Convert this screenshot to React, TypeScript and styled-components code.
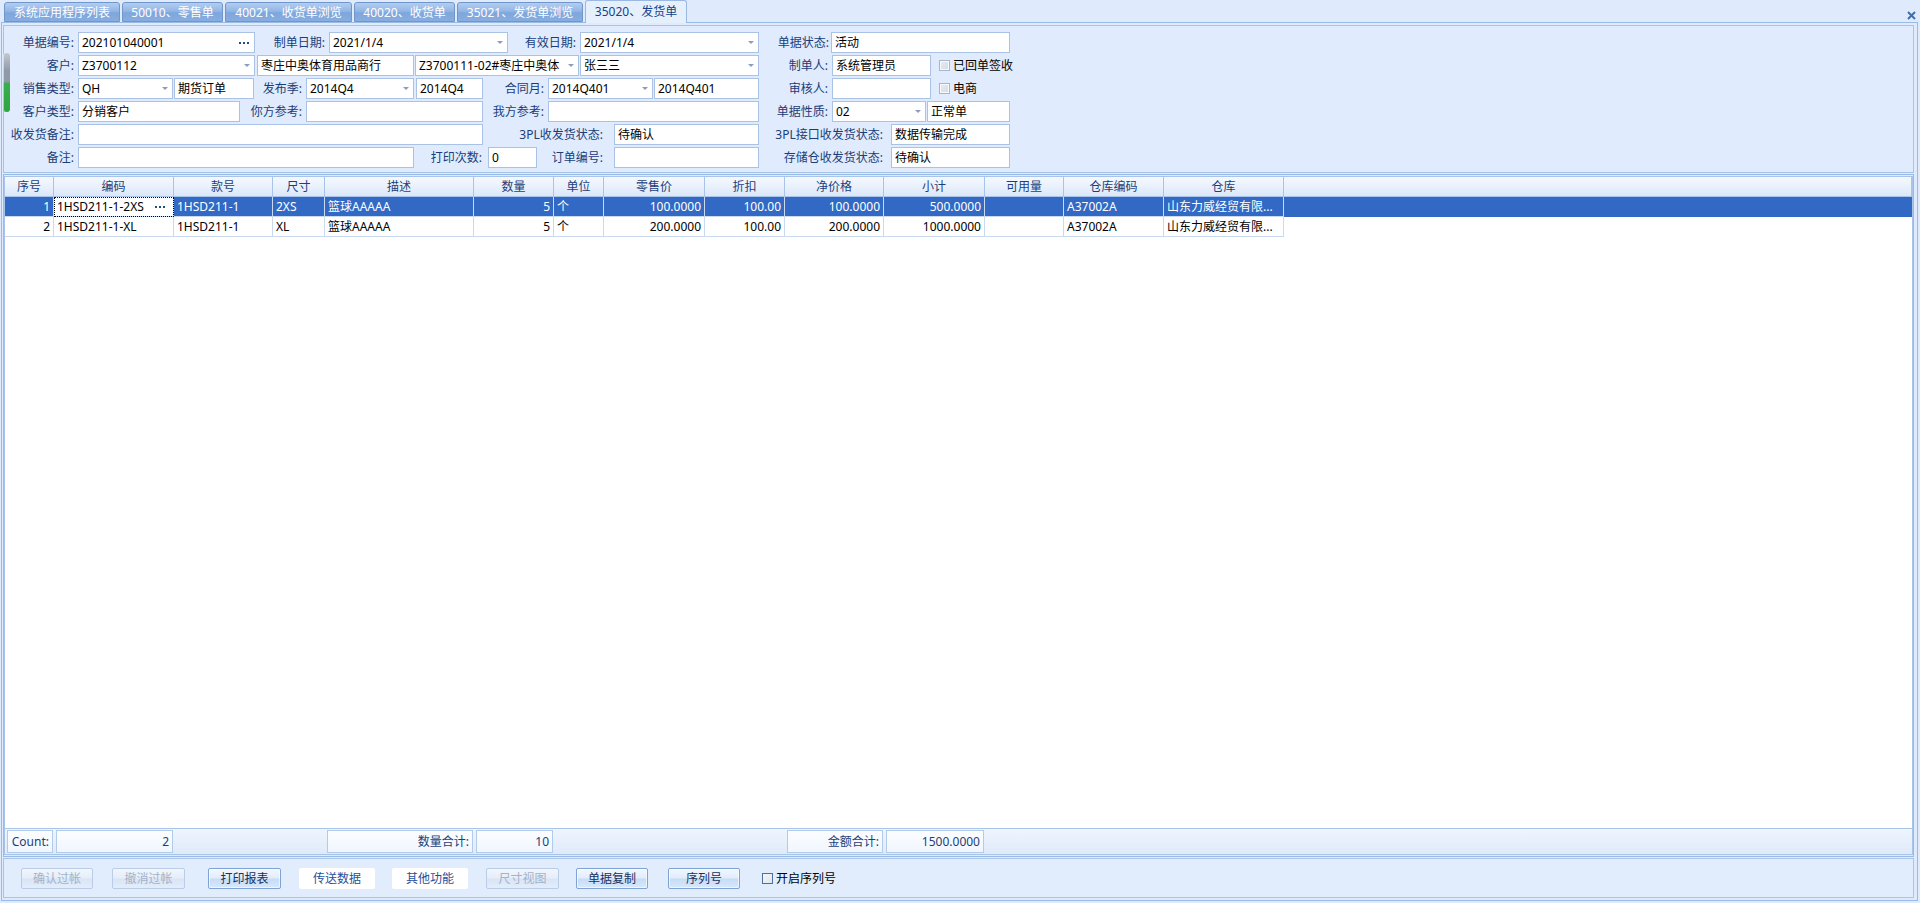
import React from "react";
import styled, { createGlobalStyle } from "styled-components";

const GlobalStyle = createGlobalStyle`
  html, body {
    margin: 0;
    padding: 0;
  }
  body {
    width: 1920px;
    height: 903px;
    overflow: hidden;
    background: #dfebfc;
    font-family: "Noto Sans", "Noto Sans CJK SC", sans-serif;
    font-size: 12px;
    line-height: 19px;
    color: #000;
  }
  * {
    box-sizing: border-box;
  }
`;

const Page = styled.div`
  width: 1920px;
  height: 903px;
  background: #dfebfc;
  display: flex;
  flex-direction: column;
`;

const TabBar = styled.div`
  height: 22px;
  display: flex;
  align-items: flex-end;
  padding-left: 4px;
  position: relative;
  flex-shrink: 0;
`;

const Tab = styled.div<{ $active?: boolean; $w: number }>`
  width: ${(p) => p.$w}px;
  height: ${(p) => (p.$active ? 23 : 20)}px;
  margin-right: 2px;
  margin-bottom: ${(p) => (p.$active ? -1 : 0)}px;
  position: relative;
  z-index: ${(p) => (p.$active ? 2 : 1)};
  display: flex;
  align-items: center;
  justify-content: center;
  white-space: nowrap;
  border: 1px solid ${(p) => (p.$active ? "#99b9e4" : "#6f97cc")};
  border-bottom: ${(p) => (p.$active ? "none" : "1px solid #6f97cc")};
  border-radius: 3px 3px 0 0;
  color: ${(p) => (p.$active ? "#15428b" : "#ffffff")};
  background: ${(p) =>
    p.$active
      ? "#e6f0fd"
      : "linear-gradient(to bottom, #b3cdf0 0%, #93b6e6 45%, #7ea6dc 55%, #88aee0 100%)"};
  padding-bottom: ${(p) => (p.$active ? 2 : 0)}px;
`;

const CloseBox = styled.div`
  position: absolute;
  right: 4px;
  top: 6px;
  width: 9px;
  height: 9px;
`;

const Frame = styled.div`
  margin-left: 1px;
  width: 1917px;
  height: 879px;
  border: 1px solid #99bbe8;
  padding: 2px 3px 2px 1px;
  display: flex;
  flex-direction: column;
  gap: 1px;
`;

const FormPanel = styled.div`
  height: 148px;
  flex-shrink: 0;
  border: 1px solid #a6c3ea;
  background: #e0ecfd;
  padding: 6px 0 0 0;
  position: relative;
`;

const SideThumb = styled.div`
  position: absolute;
  left: -1px;
  top: 27px;
  width: 7px;
  height: 59px;
  border-radius: 3px;
  background: linear-gradient(
    to bottom,
    #c3c9d0 0%,
    #8f9aa6 30%,
    #8f9aa6 48%,
    #38b04a 52%,
    #2fa443 100%
  );
  box-shadow: inset 1px 0 0 rgba(255, 255, 255, 0.5);
`;

const FormRow = styled.div`
  display: flex;
  align-items: center;
  height: 21px;
  & + & {
    margin-top: 2px;
  }
`;

const Label = styled.div<{ $w: number; $pr?: number }>`
  width: ${(p) => p.$w}px;
  flex-shrink: 0;
  text-align: right;
  padding-right: ${(p) => p.$pr ?? 4}px;
  color: #1a3c78;
  white-space: nowrap;
`;

const InputBox = styled.div<{ $w: number; $ml?: number }>`
  width: ${(p) => p.$w}px;
  height: 21px;
  flex-shrink: 0;
  margin-left: ${(p) => p.$ml ?? 0}px;
  border: 1px solid #a9c2e6;
  background: #ffffff;
  display: flex;
  align-items: center;
  padding-left: 3px;
  overflow: hidden;
`;

const InputText = styled.span`
  flex: 1;
  overflow: hidden;
  white-space: nowrap;
`;

const DropArrow = styled.span`
  width: 0;
  height: 0;
  flex-shrink: 0;
  border-left: 3px solid transparent;
  border-right: 3px solid transparent;
  border-top: 3px solid #8a9dbb;
  margin: 0 4px 0 3px;
`;

const Dots = styled.span`
  flex-shrink: 0;
  display: flex;
  gap: 2px;
  margin-right: 5px;
`;

const Dot = styled.span`
  width: 2px;
  height: 2px;
  background: #274b85;
`;

const CheckBox = styled.span<{ $ml?: number }>`
  width: 11px;
  height: 11px;
  flex-shrink: 0;
  margin-left: ${(p) => p.$ml ?? 0}px;
  border: 1px solid #a7b5c8;
  background: linear-gradient(to bottom right, #e9edf2, #d3dae3);
  box-shadow: inset 0 0 0 1px #f7f9fb;
`;

const CheckText = styled.span`
  margin-left: 3px;
  white-space: nowrap;
`;

const Grid = styled.div`
  height: 683px;
  flex-shrink: 0;
  border: 1px solid #99bbe8;
  padding: 1px 0 1px 0;
  background: #e0ecfd;
`;

const Table = styled.div`
  height: 100%;
  border: 1px solid #a9c4ea;
  display: flex;
  flex-direction: column;
  background: #ffffff;
`;

const HeaderRow = styled.div`
  height: 20px;
  display: flex;
  flex-shrink: 0;
  background: linear-gradient(to bottom, #f5f9fe 0%, #e9f1fc 50%, #dbe7f8 100%);
  border-bottom: 1px solid #a9c4ea;
`;

const HeadCell = styled.div<{ $w?: number }>`
  width: ${(p) => (p.$w ? `${p.$w}px` : "auto")};
  flex: ${(p) => (p.$w ? "0 0 auto" : "1")};
  border-right: 1px solid #a9c4ea;
  text-align: center;
  color: #1b3f7a;
  line-height: 19px;
  white-space: nowrap;
`;

const Body = styled.div`
  flex: 1;
  background: #ffffff;
`;

const DataRow = styled.div<{ $selected?: boolean }>`
  height: 20px;
  display: flex;
  background: ${(p) => (p.$selected ? "#3169c4" : "#ffffff")};
  color: ${(p) => (p.$selected ? "#ffffff" : "#000000")};
`;

const Cell = styled.div<{ $w: number; $right?: boolean; $editing?: boolean }>`
  width: ${(p) => p.$w}px;
  flex-shrink: 0;
  height: 20px;
  line-height: 19px;
  border-right: 1px solid #c9d9ef;
  border-bottom: 1px solid #c9d9ef;
  padding: 0 3px;
  text-align: ${(p) => (p.$right ? "right" : "left")};
  white-space: nowrap;
  overflow: hidden;
  ${(p) =>
    p.$editing
      ? `
    background: #ffffff;
    color: #000000;
    outline: 1px dotted #000000;
    outline-offset: -1px;
    display: flex;
    align-items: center;
  `
      : ""}
`;

const Footer = styled.div`
  height: 26px;
  flex-shrink: 0;
  border-top: 1px solid #a9c4ea;
  background: linear-gradient(to bottom, #eef5fe 0%, #dfeafa 100%);
  display: flex;
  padding-top: 1px;
`;

const FooterSlot = styled.div<{ $w: number }>`
  width: ${(p) => p.$w}px;
  flex-shrink: 0;
  padding: 0 1px 1px 2px;
`;

const SumBox = styled.div`
  height: 23px;
  border: 1px solid #b3cbea;
  background: linear-gradient(to bottom, #fbfdff, #f1f6fe);
  color: #1b3f7a;
  text-align: right;
  padding-right: 3px;
  line-height: 21px;
  white-space: nowrap;
`;

const ButtonPanel = styled.div`
  height: 40px;
  flex-shrink: 0;
  border: 1px solid #a9c4ea;
  background: #e1edfd;
  display: flex;
  align-items: center;
`;

const Btn = styled.div<{ $w: number; $ml: number; $kind: "normal" | "disabled" | "flat" }>`
  width: ${(p) => p.$w}px;
  height: 21px;
  margin-left: ${(p) => p.$ml}px;
  flex-shrink: 0;
  display: flex;
  align-items: center;
  justify-content: center;
  white-space: nowrap;
  border-radius: 2px;
  ${(p) =>
    p.$kind === "normal"
      ? `
    border: 1px solid #7fa3d4;
    color: #16325e;
    background: linear-gradient(to bottom, #f2f7fe 0%, #e2edfc 45%, #c7dcf7 55%, #d9e8fb 100%);
    box-shadow: inset 0 0 0 1px rgba(255,255,255,0.6);
  `
      : p.$kind === "disabled"
      ? `
    border: 1px solid #b9cce8;
    color: #a3b3c8;
    background: linear-gradient(to bottom, #f1f6fd 0%, #e6eefb 45%, #d9e5f6 55%, #e4edfa 100%);
  `
      : `
    border: 1px solid transparent;
    color: #1f4f9c;
    background: #ffffff;
  `}
`;

const BtnCheck = styled.span<{ $ml: number }>`
  width: 11px;
  height: 11px;
  margin-left: ${(p) => p.$ml}px;
  flex-shrink: 0;
  border: 1px solid #4f6f9f;
  background: linear-gradient(to bottom right, #f4f7fb, #dde5ef);
`;

type Seg =
  | { k: "label"; w: number; t: string; pr?: number }
  | { k: "input"; w: number; t?: string; drop?: boolean; dots?: boolean; ml?: number }
  | { k: "check"; t: string; ml?: number };

const formRows: Seg[][] = [
  [
    { k: "label", w: 74, t: "单据编号:" },
    { k: "input", w: 177, t: "202101040001", dots: true },
    { k: "label", w: 74, t: "制单日期:" },
    { k: "input", w: 179, t: "2021/1/4", drop: true },
    { k: "label", w: 72, t: "有效日期:" },
    { k: "input", w: 179, t: "2021/1/4", drop: true },
    { k: "label", w: 72, t: "单据状态:", pr: 2 },
    { k: "input", w: 179, t: "活动" },
  ],
  [
    { k: "label", w: 74, t: "客户:" },
    { k: "input", w: 177, t: "Z3700112", drop: true },
    { k: "input", w: 157, t: "枣庄中奥体育用品商行", ml: 2 },
    { k: "input", w: 164, t: "Z3700111-02#枣庄中奥体", drop: true, ml: 1 },
    { k: "input", w: 179, t: "张三三", drop: true, ml: 1 },
    { k: "label", w: 73, t: "制单人:" },
    { k: "input", w: 99, t: "系统管理员" },
    { k: "check", t: "已回单签收", ml: 8 },
  ],
  [
    { k: "label", w: 74, t: "销售类型:" },
    { k: "input", w: 95, t: "QH", drop: true },
    { k: "input", w: 80, t: "期货订单", ml: 1 },
    { k: "label", w: 52, t: "发布季:" },
    { k: "input", w: 108, t: "2014Q4", drop: true },
    { k: "input", w: 67, t: "2014Q4", ml: 2 },
    { k: "label", w: 65, t: "合同月:" },
    { k: "input", w: 105, t: "2014Q401", drop: true },
    { k: "input", w: 105, t: "2014Q401", ml: 1 },
    { k: "label", w: 73, t: "审核人:" },
    { k: "input", w: 99, t: "" },
    { k: "check", t: "电商", ml: 8 },
  ],
  [
    { k: "label", w: 74, t: "客户类型:" },
    { k: "input", w: 162, t: "分销客户" },
    { k: "label", w: 66, t: "你方参考:" },
    { k: "input", w: 177, t: "" },
    { k: "label", w: 65, t: "我方参考:" },
    { k: "input", w: 211, t: "" },
    { k: "label", w: 73, t: "单据性质:" },
    { k: "input", w: 94, t: "02", drop: true },
    { k: "input", w: 83, t: "正常单", ml: 1 },
  ],
  [
    { k: "label", w: 74, t: "收发货备注:" },
    { k: "input", w: 405, t: "" },
    { k: "label", w: 131, t: "3PL收发货状态:", pr: 11 },
    { k: "input", w: 145, t: "待确认" },
    { k: "label", w: 132, t: "3PL接口收发货状态:", pr: 8 },
    { k: "input", w: 119, t: "数据传输完成" },
  ],
  [
    { k: "label", w: 74, t: "备注:" },
    { k: "input", w: 336, t: "" },
    { k: "label", w: 74, t: "打印次数:", pr: 6 },
    { k: "input", w: 49, t: "0" },
    { k: "label", w: 77, t: "订单编号:", pr: 11 },
    { k: "input", w: 145, t: "" },
    { k: "label", w: 132, t: "存储仓收发货状态:", pr: 8 },
    { k: "input", w: 119, t: "待确认" },
  ],
];

const columns = [
  { t: "序号", w: 49, r: true },
  { t: "编码", w: 120 },
  { t: "款号", w: 99 },
  { t: "尺寸", w: 52 },
  { t: "描述", w: 149 },
  { t: "数量", w: 80, r: true },
  { t: "单位", w: 50 },
  { t: "零售价", w: 101, r: true },
  { t: "折扣", w: 80, r: true },
  { t: "净价格", w: 99, r: true },
  { t: "小计", w: 101, r: true },
  { t: "可用量", w: 79, r: true },
  { t: "仓库编码", w: 100 },
  { t: "仓库", w: 120 },
];

const rows = [
  ["1", "1HSD211-1-2XS", "1HSD211-1", "2XS", "篮球AAAAA", "5", "个", "100.0000", "100.00", "100.0000", "500.0000", "", "A37002A", "山东力威经贸有限..."],
  ["2", "1HSD211-1-XL", "1HSD211-1", "XL", "篮球AAAAA", "5", "个", "200.0000", "100.00", "200.0000", "1000.0000", "", "A37002A", "山东力威经贸有限..."],
];

// footer summary sits under the matching columns
const footer: Record<number, string> = {
  0: "Count:",
  1: "2",
  4: "数量合计:",
  5: "10",
  9: "金额合计:",
  10: "1500.0000",
};

const tabs = [
  { t: "系统应用程序列表", w: 116 },
  { t: "50010、零售单", w: 101 },
  { t: "40021、收货单浏览", w: 127 },
  { t: "40020、收货单", w: 101 },
  { t: "35021、发货单浏览", w: 126 },
  { t: "35020、发货单", w: 102, active: true },
];

const buttons: { t: string; w: number; ml: number; kind: "normal" | "disabled" | "flat" }[] = [
  { t: "确认过帐", w: 72, ml: 17, kind: "disabled" },
  { t: "撤消过帐", w: 73, ml: 19, kind: "disabled" },
  { t: "打印报表", w: 73, ml: 23, kind: "normal" },
  { t: "传送数据", w: 76, ml: 18, kind: "flat" },
  { t: "其他功能", w: 76, ml: 17, kind: "flat" },
  { t: "尺寸视图", w: 73, ml: 18, kind: "disabled" },
  { t: "单据复制", w: 72, ml: 17, kind: "normal" },
  { t: "序列号", w: 72, ml: 20, kind: "normal" },
];

const Ellipsis = () => (
  <Dots>
    <Dot />
    <Dot />
    <Dot />
  </Dots>
);

const renderSeg = (s: Seg, i: number) => {
  if (s.k === "label") {
    return (
      <Label key={i} $w={s.w} $pr={s.pr}>
        {s.t}
      </Label>
    );
  }
  if (s.k === "check") {
    return (
      <React.Fragment key={i}>
        <CheckBox $ml={s.ml} />
        <CheckText>{s.t}</CheckText>
      </React.Fragment>
    );
  }
  return (
    <InputBox key={i} $w={s.w} $ml={s.ml}>
      <InputText>{s.t}</InputText>
      {s.drop && <DropArrow />}
      {s.dots && <Ellipsis />}
    </InputBox>
  );
};

const App = () => {
  return (
    <Page>
      <GlobalStyle />
      <TabBar>
        {tabs.map((tab) => (
          <Tab key={tab.t} $w={tab.w} $active={tab.active}>
            {tab.t}
          </Tab>
        ))}
        <CloseBox>
          <svg width="9" height="9" viewBox="0 0 9 9">
            <path d="M1 1 L8 8 M8 1 L1 8" stroke="#3f6db0" strokeWidth="2" />
          </svg>
        </CloseBox>
      </TabBar>
      <Frame>
        <FormPanel>
          <SideThumb />
          {formRows.map((row, ri) => (
            <FormRow key={ri}>{row.map(renderSeg)}</FormRow>
          ))}
        </FormPanel>
        <Grid>
          <Table>
            <HeaderRow>
              {columns.map((c) => (
                <HeadCell key={c.t} $w={c.w}>
                  {c.t}
                </HeadCell>
              ))}
              <HeadCell />
            </HeaderRow>
            <Body>
              {rows.map((r, ri) => (
                <DataRow key={ri} $selected={ri === 0}>
                  {r.map((v, ci) =>
                    ri === 0 && ci === 1 ? (
                      <Cell key={ci} $w={columns[ci].w} $editing>
                        <InputText>{v}</InputText>
                        <Ellipsis />
                      </Cell>
                    ) : (
                      <Cell key={ci} $w={columns[ci].w} $right={columns[ci].r}>
                        {v}
                      </Cell>
                    )
                  )}
                </DataRow>
              ))}
            </Body>
            <Footer>
              {columns.map((c, ci) => (
                <FooterSlot key={c.t} $w={c.w}>
                  {footer[ci] !== undefined && <SumBox>{footer[ci]}</SumBox>}
                </FooterSlot>
              ))}
            </Footer>
          </Table>
        </Grid>
        <ButtonPanel>
          {buttons.map((b) => (
            <Btn key={b.t} $w={b.w} $ml={b.ml} $kind={b.kind}>
              {b.t}
            </Btn>
          ))}
          <BtnCheck $ml={22} />
          <CheckText>开启序列号</CheckText>
        </ButtonPanel>
      </Frame>
    </Page>
  );
};

export default App;
